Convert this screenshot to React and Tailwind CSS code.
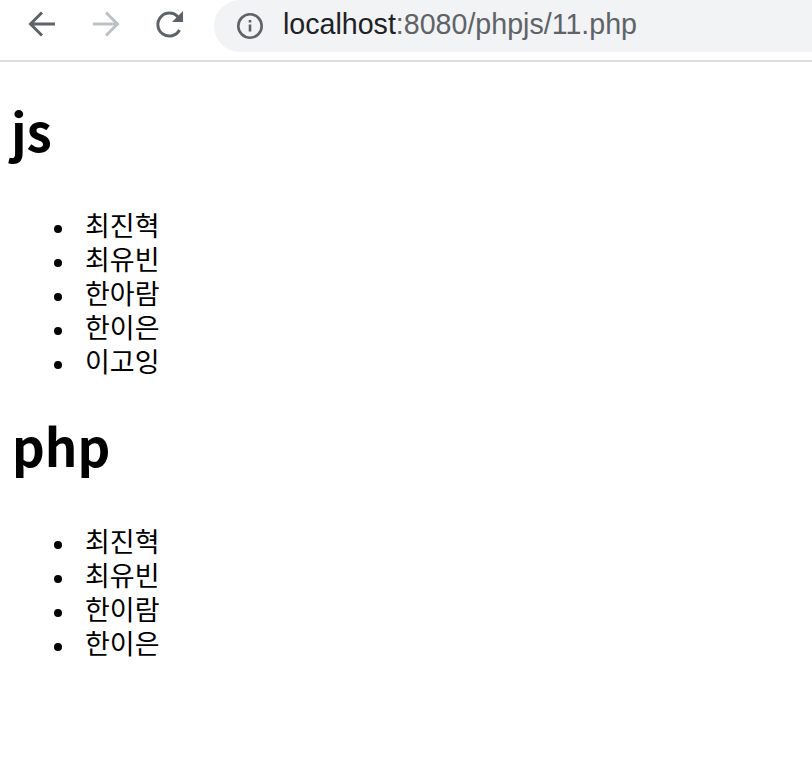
import React from "react";

const font = "font-['Noto_Sans_CJK_KR','Noto_Sans',sans-serif]";

function List({ items }) {
  return (
    <ul className="list-none pl-[54px] text-[27px] leading-[34px] text-black">
      {items.map((t, i) => (
        <li key={i} className="flex items-center h-[34px]">
          <span className="w-[8px] h-[8px] mt-[8px] rounded-full bg-black shrink-0" />
          <span className="ml-[23px] -mt-[1px]">{t}</span>
        </li>
      ))}
    </ul>
  );
}

export default function App() {
  return (
    <div className={`w-[812px] h-[764px] bg-white overflow-hidden ${font}`}>
      <div className="h-[62px] border-b-2 border-[#dcdce0] flex items-start pl-[24px] overflow-hidden">
        <svg className="mt-[6px]" width="36" height="36" viewBox="0 0 36 36" fill="none" stroke="#5f6368" strokeWidth="3">
          <path d="M31 18H7M18 6.500L6.500 18 18 29.500" />
        </svg>
        <svg className="mt-[6px] ml-[28px]" width="36" height="36" viewBox="0 0 36 36" fill="none" stroke="#bdc1c6" strokeWidth="3">
          <path d="M5 18h24M18 6.500L29.500 18 18 29.500" />
        </svg>
        <svg className="mt-[6px] ml-[28px]" width="36" height="36" viewBox="0 0 36 36" fill="none">
          <path d="M27.500 24a11.500 11.500 0 1 1-1.500-13" stroke="#5f6368" strokeWidth="3" />
          <path d="M31 5v11H20z" fill="#5f6368" />
        </svg>
        <div className="flex-1 h-[52px] ml-[26px] bg-[#f1f3f4] rounded-l-[26px] flex items-center pl-[22px] gap-[19px]">
          <svg width="28" height="28" viewBox="0 0 28 28" fill="none" stroke="#5f6368" strokeWidth="2.6">
            <circle cx="14" cy="14" r="11.700" />
            <path d="M14 12.500v7M14 8v2.600" />
          </svg>
          <span className="text-[28.6px] -mt-[3px] font-['Liberation_Sans',sans-serif] text-[#5f6368]">
            <span className="text-[#202124]">localhost</span>:8080/phpjs/11.php
          </span>
        </div>
      </div>
      <h1 className="text-[51px] font-bold leading-[70px] ml-[11px] mt-[33px] text-black">js</h1>
      <div className="mt-[43px]"><List items={["최진혁", "최유빈", "한아람", "한이은", "이고잉"]} /></div>
      <h1 className="text-[51px] font-bold leading-[70px] ml-[12px] mt-[32px] text-black">php</h1>
      <div className="mt-[44px]"><List items={["최진혁", "최유빈", "한이람", "한이은"]} /></div>
    </div>
  );
}
